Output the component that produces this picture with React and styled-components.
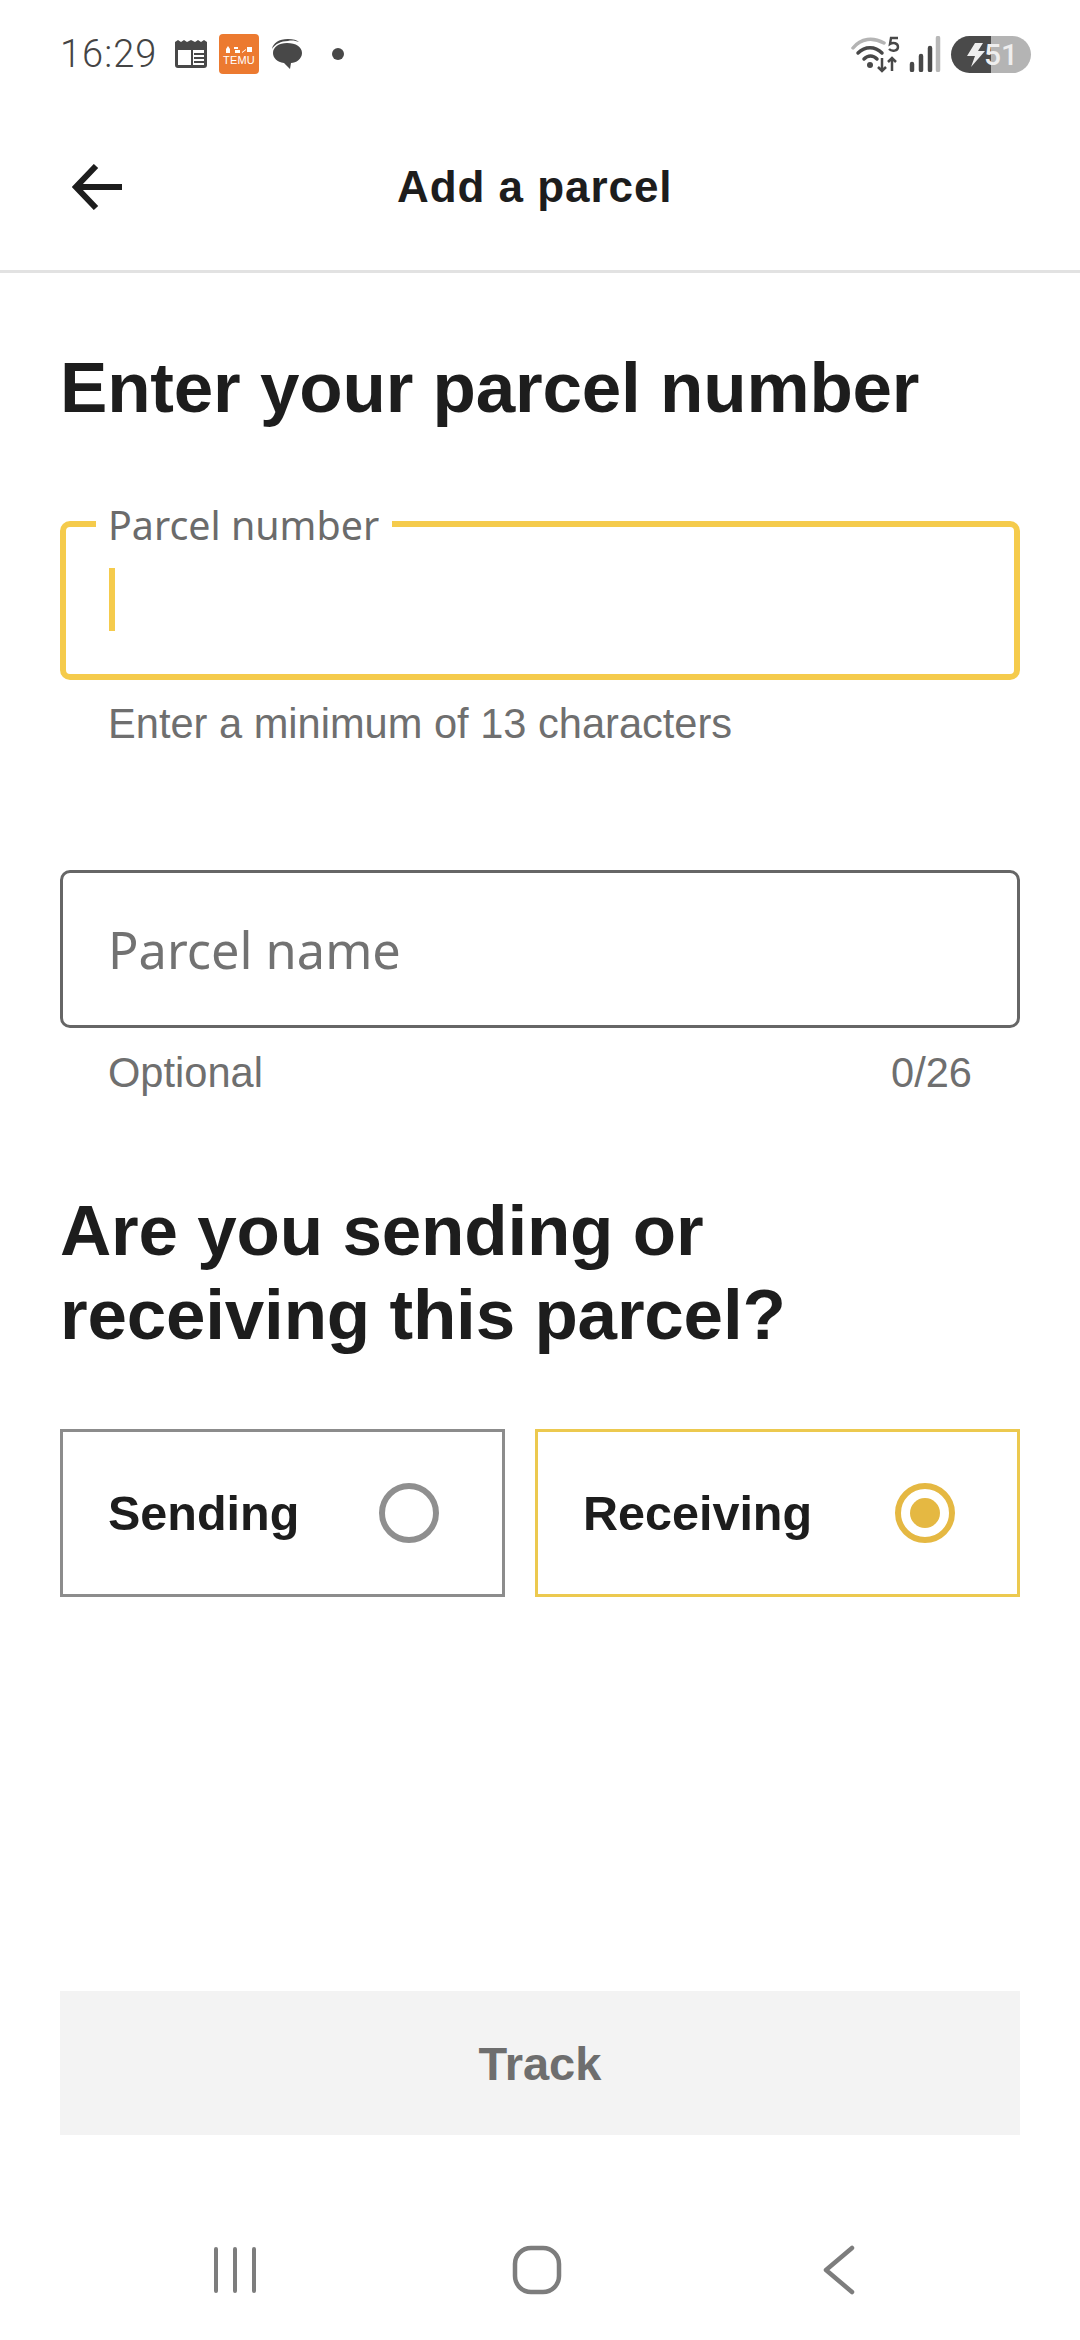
import React from 'react'
import styled, { createGlobalStyle } from 'styled-components'

const Global = createGlobalStyle`
  html, body { margin: 0; padding: 0; background: #fff; }
  * { box-sizing: border-box; }
`

const Page = styled.div`
  width: 1080px;
  height: 2340px;
  display: flex;
  flex-direction: column;
  background: #fff;
  font-family: "Liberation Sans", Arial, sans-serif;
  color: #1d1d1d;
  overflow: hidden;
`

const StatusBar = styled.div`
  height: 110px;
  flex: none;
  padding: 0 49px 2px 60px;
  display: flex;
  align-items: center;
  justify-content: space-between;
`
const StatusLeft = styled.div`
  display: flex;
  align-items: center;
`
const StatusRight = styled.div`
  display: flex;
  align-items: center;
`
const Clock = styled.span`
  font-family: Roboto, sans-serif;
  font-weight: 300;
  font-size: 38px;
  letter-spacing: 1px;
  color: #444;
  width: 114px;
`
const Temu = styled.div`
  width: 40px;
  height: 40px;
  margin: 0 11px;
  border-radius: 4px;
  background: #ec7a30;
  color: #fff;
  display: flex;
  flex-direction: column;
  align-items: center;
  justify-content: flex-end;
  padding-bottom: 9px;
  font-size: 11px;
  line-height: 10px;
  font-weight: 400;
  letter-spacing: .2px;
`
const TemuMarks = styled.svg`
  margin-bottom: 2px;
`
const Dot = styled.span`
  width: 12px;
  height: 12px;
  border-radius: 50%;
  background: #484848;
  margin-left: 28px;
`
const Battery = styled.div`
  position: relative;
  width: 80px;
  height: 37px;
  margin-left: 10px;
  border-radius: 19px;
  overflow: hidden;
  background: linear-gradient(90deg, #4a4a4a 0 50%, #b4b4b4 50% 100%);
  display: flex;
  align-items: center;
  color: #eee;
  font-family: Roboto, sans-serif;
  font-size: 30px;
  font-weight: 500;
  padding-left: 33px;
`
const BatteryBolt = styled.svg`
  position: absolute;
  left: 13px;
  top: 7px;
`

const Header = styled.div`
  height: 163px;
  flex: none;
  display: flex;
  align-items: center;
  padding: 0 0 6px 72px;
  position: relative;
  border-bottom: 3px solid #e2e2e2;
`
const HeaderTitle = styled.div`
  position: absolute;
  left: 397px;
  top: 54px;
  font-size: 44px;
  font-weight: 700;
  letter-spacing: .95px;
  line-height: 46px;
`

const Content = styled.div`
  flex: 1;
  display: flex;
  flex-direction: column;
  padding: 0 60px;
`
const Heading = styled.h1`
  margin: ${p => p.$top}px 0 0;
  font-size: 71px;
  line-height: 84px;
  font-weight: 700;
  letter-spacing: -0.2px;
  color: #1d1d1d;
`

const Field = styled.div`
  position: relative;
  height: ${p => p.$focus ? 159 : 158}px;
  margin-top: ${p => p.$top}px;
  border: ${p => p.$focus ? '6px solid #f5cb4c' : '3px solid #666'};
  border-radius: 10px;
  padding-left: ${p => p.$focus ? 43 : 45}px;
  display: flex;
  align-items: center;
`
const FloatLabel = styled.span`
  position: absolute;
  left: 30px;
  top: -24px;
  padding: 0 13px 0 12px;
  background: #fff;
  font-family: "Noto Sans", sans-serif;
  font-size: 39.4px;
  line-height: 44px;
  color: #6b6b6b;
`
const Caret = styled.span`
  width: 6px;
  height: 63px;
  margin-bottom: 3px;
  background: #f5cb4c;
`
const Placeholder = styled.span`
  font-family: "Noto Sans", sans-serif;
  font-size: 50.5px;
  color: #727272;
`
const Hint = styled.div`
  display: flex;
  justify-content: space-between;
  margin-top: ${p => p.$top}px;
  padding: 0 48px;
  font-size: 41.6px;
  line-height: 48px;
  color: #6f6f6f;
`

const Choices = styled.div`
  display: grid;
  grid-template-columns: 445px 485px;
  gap: 30px;
  margin-top: 72px;
`
const Choice = styled.div`
  height: 168px;
  border: 3px solid ${p => p.$on ? '#ecc94f' : '#8c8c8c'};
  display: flex;
  align-items: center;
  justify-content: space-between;
  padding: 0 ${p => p.$on ? 62 : 63}px 0 45px;
  font-size: 48.5px;
  font-weight: 700;
`
const Radio = styled.span`
  width: 60px;
  height: 60px;
  border-radius: 50%;
  border: 6px solid ${p => p.$on ? '#e5b842' : '#8f8f8f'};
  display: flex;
  align-items: center;
  justify-content: center;
  &::after {
    content: '';
    display: ${p => p.$on ? 'block' : 'none'};
    width: 30px;
    height: 30px;
    border-radius: 50%;
    background: #e5b842;
  }
`

const TrackButton = styled.div`
  margin-top: auto;
  height: 144px;
  flex: none;
  background: #f3f3f3;
  color: #6e6e6e;
  font-size: 47px;
  font-weight: 700;
  display: flex;
  align-items: center;
  justify-content: center;
`

const NavBar = styled.div`
  height: 205px;
  flex: none;
  display: grid;
  grid-template-columns: repeat(3, 302px);
  align-items: center;
  justify-items: center;
  padding: 64px 0 0 84px;
`

export default function App() {
  return (
    <Page>
      <Global />
      <StatusBar>
        <StatusLeft>
          <Clock>16:29</Clock>
          <svg width="34" height="30" viewBox="0 0 34 30">
            <path d="M1 3l3-2 3 2 3-2 3 2 4-2 4 2 3-2 3 2 3-2 3 2v23a3 3 0 0 1-3 3H4a3 3 0 0 1-3-3z" fill="#484848" />
            <rect x="4" y="8" width="26" height="18" fill="#fff" />
            <rect x="4" y="8" width="26" height="3" fill="#484848" />
            <path d="M18 11v15M20 15h10M20 19h10M20 23h10" stroke="#484848" strokeWidth="2" />
          </svg>
          <Temu>
            <TemuMarks width="28" height="7" viewBox="0 0 28 7">
              <path d="M3 0l2 3v4H1V3zM9 1h4v2H9zM10 4h5v3h-5zM17 6l4-3v1l-4 3zM22 1h5v5h-5z" fill="#fff" />
            </TemuMarks>
            TEMU
          </Temu>
          <svg width="34" height="34" viewBox="0 0 34 34">
            <path d="M2 12C3 6 9 2 18 2c5 0 9 1 11 3-3-1-7-2-11-1C11 4 5 7 2 12z" fill="#484848" />
            <path d="M17 6c9 0 15 4 15 10s-6 10-11 10l-1 6-6-6C7 25 3 21 3 16 3 10 9 6 17 6z" fill="#484848" />
          </svg>
          <Dot />
        </StatusLeft>
        <StatusRight>
          <svg width="50" height="40" viewBox="0 0 50 40">
            <path d="M2 14C10 4 22 3 33 9" fill="none" stroke="#b4b4b4" strokeWidth="3.5" strokeLinecap="round" />
            <path d="M7 19c7-7 17-7 24 0" fill="none" stroke="#484848" strokeWidth="3.5" strokeLinecap="round" />
            <path d="M13 25c4-4 9-4 13 0" fill="none" stroke="#484848" strokeWidth="3.5" strokeLinecap="round" />
            <circle cx="19" cy="31" r="3" fill="#484848" />
            <path d="M31 24v13M27 33l4 4 4-4M41 37V24M37 28l4-4 4 4" fill="none" stroke="#484848" strokeWidth="2.5" />
            <path d="M47 4h-7l-1 6c3-2 8-1 8 3s-6 5-9 2" fill="none" stroke="#484848" strokeWidth="2.4" />
          </svg>
          <svg width="32" height="36" viewBox="0 0 32 36" style={{ marginLeft: 8 }}>
            <path d="M3 28v6M12 20v14M21 12v22" stroke="#484848" strokeWidth="4.5" strokeLinecap="round" />
            <path d="M29 2v32" stroke="#b8b8b8" strokeWidth="4.5" strokeLinecap="round" />
          </svg>
          <Battery>
            <BatteryBolt width="22" height="24" viewBox="0 0 22 24">
              <path d="M11 0h8l-5 8h7L7 24l4-11H3z" fill="#eee" />
            </BatteryBolt>
            51
          </Battery>
        </StatusRight>
      </StatusBar>

      <Header>
        <svg width="50" height="46" viewBox="0 0 50 46">
          <path d="M24 2L4 23l20 21M4 23h46" fill="none" stroke="#1d1d1d" strokeWidth="6" />
        </svg>
        <HeaderTitle>Add a parcel</HeaderTitle>
      </Header>

      <Content>
        <Heading $top={73}>Enter your parcel number</Heading>
        <Field $focus $top={91}>
          <FloatLabel>Parcel number</FloatLabel>
          <Caret />
        </Field>
        <Hint $top={20}><span>Enter a minimum of 13 characters</span></Hint>
        <Field $top={122}><Placeholder>Parcel name</Placeholder></Field>
        <Hint $top={21}><span>Optional</span><span>0/26</span></Hint>
        <Heading $top={92}>Are you sending or<br />receiving this parcel?</Heading>
        <Choices>
          <Choice>Sending<Radio /></Choice>
          <Choice $on>Receiving<Radio $on /></Choice>
        </Choices>
        <TrackButton>Track</TrackButton>
      </Content>

      <NavBar>
        <svg width="46" height="46" viewBox="0 0 46 46">
          <path d="M4 2v42M23 2v42M42 2v42" stroke="#7d7d7d" strokeWidth="4" strokeLinecap="round" />
        </svg>
        <svg width="50" height="50" viewBox="0 0 50 50">
          <rect x="3" y="3" width="44" height="44" rx="16" fill="none" stroke="#7d7d7d" strokeWidth="4.5" />
        </svg>
        <svg width="32" height="50" viewBox="0 0 32 50">
          <path d="M29 3L3 25l26 22" fill="none" stroke="#7d7d7d" strokeWidth="4.5" strokeLinecap="round" strokeLinejoin="round" />
        </svg>
      </NavBar>
    </Page>
  )
}
